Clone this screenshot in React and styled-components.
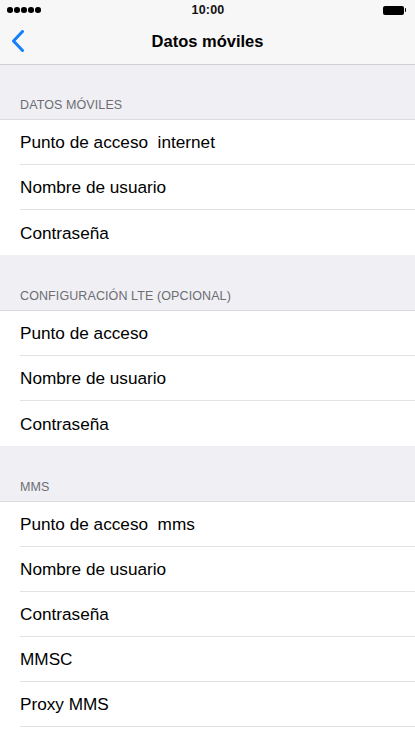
import React from "react";
import styled, { createGlobalStyle } from "styled-components";

const Global = createGlobalStyle`
  html, body { margin: 0; padding: 0; background: #efeff4; }
  body { font-family: "Liberation Sans", Arial, sans-serif; -webkit-font-smoothing: antialiased; }
  * { box-sizing: border-box; }
`;

const Screen = styled.div`
  width: 415px;
  height: 738px;
  overflow: hidden;
  background: #efeff4;
  display: flex;
  flex-direction: column;
`;

const TopBar = styled.header`
  background: #f7f7f7;
  border-bottom: 1px solid #d0d0d4;
  height: 65px;
  display: flex;
  flex-direction: column;
  flex-shrink: 0;
`;

const StatusBar = styled.div`
  height: 20px;
  display: grid;
  grid-template-columns: 1fr auto 1fr;
  align-items: center;
  padding: 0 6px 0 7px;
`;

const Dots = styled.div`
  display: flex;
  gap: 1.5px;
`;

const Dot = styled.span`
  width: 5.5px;
  height: 5.5px;
  border-radius: 50%;
  background: #000;
`;

const Time = styled.div`
  font-size: 12.5px;
  font-weight: 700;
  color: #111;
  letter-spacing: 0.2px;
`;

const BatteryWrap = styled.div`
  justify-self: end;
  display: flex;
  align-items: center;
  padding-right: 3px;
`;

const BatteryBody = styled.span`
  width: 21px;
  height: 9px;
  border-radius: 2px;
  background: #000;
`;

const BatteryTip = styled.span`
  width: 1.5px;
  height: 4px;
  background: #000;
  margin-left: 1px;
  border-radius: 0 1px 1px 0;
`;

const NavBar = styled.div`
  flex: 1;
  display: grid;
  grid-template-columns: 60px 1fr 60px;
  align-items: center;
`;

const Back = styled.div`
  padding-left: 11px;
  display: flex;
  align-items: center;
  height: 100%;
  padding-bottom: 2px;
`;

const Title = styled.h1`
  margin: 0;
  text-align: center;
  font-size: 16.5px;
  font-weight: 700;
  color: #000;
  padding-bottom: 2px;
`;

const SectionHeader = styled.div`
  height: ${(p) => p.h}px;
  padding: 0 20px 7px;
  display: flex;
  align-items: flex-end;
  font-size: 12.5px;
  color: #6d6d72;
  text-transform: uppercase;
  letter-spacing: 0.1px;
`;

const Group = styled.div`
  background: #fff;
  border-top: 1px solid #dcdce0;
`;

const Row = styled.div`
  height: 45px;
  margin-left: 20px;
  display: flex;
  align-items: center;
  font-size: 17.2px;
  color: #000;
  border-bottom: ${(p) => (p.$last ? "none" : "1px solid #e3e3e6")};
  white-space: pre;
  padding-top: 1px;
`;

const Tail = styled.div`
  flex: 1;
  background: #fff;
`;

const sections = [
  { title: "Datos móviles", gap: 54, rows: ["Punto de acceso  internet", "Nombre de usuario", "Contraseña"] },
  { title: "Configuración LTE (opcional)", gap: 55, rows: ["Punto de acceso", "Nombre de usuario", "Contraseña"] },
  { title: "MMS", gap: 55, rows: ["Punto de acceso  mms", "Nombre de usuario", "Contraseña", "MMSC", "Proxy MMS"] },
];

export default function App() {
  return (
    <Screen>
      <Global />
      <TopBar>
        <StatusBar>
          <Dots>
            {[0, 1, 2, 3, 4].map((i) => (
              <Dot key={i} />
            ))}
          </Dots>
          <Time>10:00</Time>
          <BatteryWrap>
            <BatteryBody />
            <BatteryTip />
          </BatteryWrap>
        </StatusBar>
        <NavBar>
          <Back>
            <svg width="14" height="22" viewBox="0 0 14 22">
              <path d="M11.5 1.5 L2.5 11 L11.5 20.5" fill="none" stroke="#157efb" strokeWidth="3" strokeLinecap="round" strokeLinejoin="round" />
            </svg>
          </Back>
          <Title>Datos móviles</Title>
          <div />
        </NavBar>
      </TopBar>
      {sections.map((s, si) => {
        const isLastSection = si === sections.length - 1;
        return (
          <React.Fragment key={si}>
            <SectionHeader h={s.gap}>{s.title}</SectionHeader>
            <Group>
              {s.rows.map((r, ri) => (
                <Row key={ri} $last={!isLastSection && ri === s.rows.length - 1}>
                  {r}
                </Row>
              ))}
            </Group>
            {isLastSection && <Tail />}
          </React.Fragment>
        );
      })}
    </Screen>
  );
}
